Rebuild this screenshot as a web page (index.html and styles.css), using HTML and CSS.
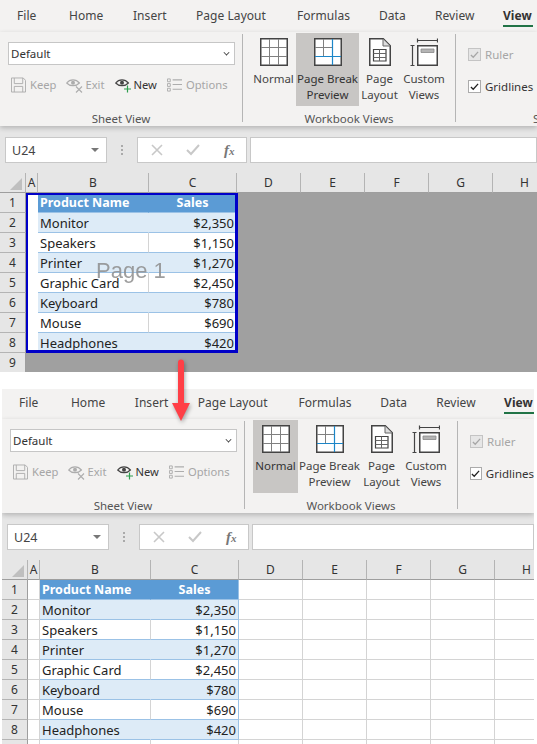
FILE: index.html
```html
<!DOCTYPE html>
<html lang="en">
<head>
<meta charset="utf-8">
<title>Page Break Preview vs Normal view</title>
<link rel="stylesheet" href="styles.css">
</head>
<body>
<svg class="sprite" aria-hidden="true">
  <symbol id="i-normal" viewBox="0 0 28 28">
    <path d="M.75.75h26.5v26.5H.75z" fill="#fff" stroke="#444" stroke-width="1.5"/>
    <path d="M9.5 1v26M18.5 1v26M1 9.5h26M1 18.5h26" fill="none" stroke="#808080" stroke-width="1"/>
  </symbol>
  <symbol id="i-break" viewBox="0 0 28 28">
    <path d="M.75.75h26.5v26.5H.75z" fill="#fff" stroke="#444" stroke-width="1.5"/>
    <path d="M9.5 1v18M1 9.5h18" fill="none" stroke="#808080" stroke-width="1"/>
    <path d="M18.5 1v26M1 18.5h26" fill="none" stroke="#1c86c8" stroke-width="1.2"/>
  </symbol>
  <symbol id="i-page" viewBox="0 0 22 28">
    <path d="M.75.75h13.5l7 7v19.5H.75z" fill="#fff" stroke="#444" stroke-width="1.5"/>
    <path d="M14 1v7h7" fill="#ddd" stroke="#666" stroke-width="1"/>
    <path d="M4.5 11.5h12.5v11.5H4.5z" fill="none" stroke="#444" stroke-width="1.2"/>
    <path d="M4.5 15.5h12.5M4.5 19.5h12.5M10.5 11.5v11.5" fill="none" stroke="#666" stroke-width="1"/>
  </symbol>
  <symbol id="i-custom" viewBox="0 0 28 28">
    <path d="M7.5 2.5h20M7.5.5v4M27.5.5v4M.5 7.5h4M.5 27.5h4M2.5 7.5v20" fill="none" stroke="#444" stroke-width="1.2"/>
    <path d="M7.75 7.75h19.5v19.5H7.75z" fill="#fff" stroke="#444" stroke-width="1.5"/>
    <path d="M11 11h13v3.5H11z" fill="#b4b4b4" stroke="#888" stroke-width=".8"/>
  </symbol>
  <symbol id="i-keep" viewBox="0 0 16 16">
    <path d="M.5.5h12.5l2.5 2.5v12.5H.5zM3.5.5v6h9v-6M3.5 15.5v-6h9v6" fill="none" stroke="#adadad" stroke-width="1"/>
  </symbol>
  <symbol id="i-exit" viewBox="0 0 17 16">
    <path d="M.7 6C4 1.8 10 1.8 13.4 6 10 9.6 4 9.6.7 6z" fill="none" stroke="#adadad" stroke-width="1.2"/>
    <circle cx="7" cy="5.8" r="2" fill="#adadad"/>
    <path d="M10 9.5l6 6M16 9.5l-6 6" fill="none" stroke="#adadad" stroke-width="1.1"/>
  </symbol>
  <symbol id="i-new" viewBox="0 0 17 16">
    <path d="M.7 6C4 1.8 10 1.8 13.4 6 10 9.6 4 9.6.7 6z" fill="none" stroke="#444" stroke-width="1.2"/>
    <circle cx="7" cy="5.8" r="2" fill="#444"/>
    <path d="M12.5 8.5v7M9 12h7" fill="none" stroke="#2f9e4f" stroke-width="1.2"/>
  </symbol>
  <symbol id="i-options" viewBox="0 0 16 16">
    <path d="M.5 1.5h3v3h-3zM.5 6.5h3v3h-3zM.5 11.5h3v3h-3z" fill="none" stroke="#adadad"/>
    <path d="M6 2.5h10M6 7.5h10M6 12.5h10" fill="none" stroke="#adadad" stroke-width="1.2"/>
  </symbol>
  <symbol id="i-cancel" viewBox="0 0 12 12"><path d="M1 1l10 10M11 1L1 11" fill="none" stroke="#c8c8c8" stroke-width="1.6"/></symbol>
  <symbol id="i-enter" viewBox="0 0 14 12"><path d="M1 6l4 4 8-9" fill="none" stroke="#c8c8c8" stroke-width="2"/></symbol>
  <symbol id="i-check" viewBox="0 0 10 10"><path d="M1 5.5l2.6 2.6L9 2" fill="none" stroke="currentColor" stroke-width="1.4"/></symbol>
</svg>

<section class="panel panel-top">
  <nav class="tabs">
    <span class="tab t-file">File</span><span class="tab t-home">Home</span><span class="tab t-insert">Insert</span><span class="tab t-layout">Page Layout</span><span class="tab t-formulas">Formulas</span><span class="tab t-data">Data</span><span class="tab t-review">Review</span><span class="tab tab-active">View</span>
  </nav>
  <div class="ribbon">
    <div class="group g-sheet">
      <div class="dropdown"><span>Default</span><span class="chev"></span></div>
      <div class="actions">
        <span class="act off"><svg class="ico-s"><use href="#i-keep"/></svg>Keep</span>
        <span class="act off"><svg class="ico-e"><use href="#i-exit"/></svg>Exit</span>
        <span class="act"><svg class="ico-e"><use href="#i-new"/></svg>New</span>
        <span class="act off"><svg class="ico-s"><use href="#i-options"/></svg>Options</span>
      </div>
      <div class="glabel">Sheet View</div>
    </div>
    <div class="group g-views">
      <div class="views">
        <div class="view v-normal"><svg class="ico-l"><use href="#i-normal"/></svg><span>Normal</span></div>
        <div class="view v-break on"><svg class="ico-l"><use href="#i-break"/></svg><span>Page Break<br>Preview</span></div>
        <div class="view v-page"><svg class="ico-p"><use href="#i-page"/></svg><span>Page<br>Layout</span></div>
        <div class="view v-custom"><svg class="ico-l"><use href="#i-custom"/></svg><span>Custom<br>Views</span></div>
      </div>
      <div class="glabel">Workbook Views</div>
    </div>
    <div class="group g-show">
      <label class="chk off"><span class="box"><svg class="tick"><use href="#i-check"/></svg></span>Ruler</label>
      <label class="chk"><span class="box"><svg class="tick"><use href="#i-check"/></svg></span>Gridlines</label>
      <div class="glabel glabel-left">Show</div>
    </div>
  </div>
  <div class="fbar">
    <div class="namebox"><span>U24</span><span class="tri"></span></div>
    <div class="dots"></div>
    <div class="fx"><svg class="ico-x"><use href="#i-cancel"/></svg><svg class="ico-c"><use href="#i-enter"/></svg><i>f<small>x</small></i></div>
    <div class="input"></div>
  </div>
  <div class="sheet">
    <div class="head corner"><svg class="tri-corner" viewBox="0 0 12 12"><path d="M12 0v12H0z" fill="#bfbfbf"/></svg></div>
    <div class="head">A</div><div class="head">B</div><div class="head">C</div><div class="head">D</div><div class="head">E</div><div class="head">F</div><div class="head">G</div><div class="head">H</div>

    <div class="rh">1</div><div class="c a"></div><div class="c b hd">Product Name</div><div class="c cc hd mid">Sales</div><div class="out"></div>
    <div class="rh">2</div><div class="c a"></div><div class="c b band">Monitor</div><div class="c cc band">$2,350</div><div class="out"></div>
    <div class="rh">3</div><div class="c a"></div><div class="c b tb">Speakers</div><div class="c cc tb">$1,150</div><div class="out"></div>
    <div class="rh">4</div><div class="c a"></div><div class="c b band">Printer</div><div class="c cc band">$1,270</div><div class="out"></div>
    <div class="rh">5</div><div class="c a"></div><div class="c b tb">Graphic Card</div><div class="c cc tb">$2,450</div><div class="out"></div>
    <div class="rh">6</div><div class="c a"></div><div class="c b band">Keyboard</div><div class="c cc band">$780</div><div class="out"></div>
    <div class="rh">7</div><div class="c a"></div><div class="c b tb">Mouse</div><div class="c cc tb">$690</div><div class="out"></div>
    <div class="rh">8</div><div class="c a"></div><div class="c b band">Headphones</div><div class="c cc band">$420</div><div class="out"></div>
    <div class="rh">9</div><div class="out out-wide"></div>

    <div class="print-area"></div>
    <div class="watermark">Page 1</div>
  </div>
</section>

<section class="panel panel-bottom">
  <nav class="tabs">
    <span class="tab t-file">File</span><span class="tab t-home">Home</span><span class="tab t-insert">Insert</span><span class="tab t-layout">Page Layout</span><span class="tab t-formulas">Formulas</span><span class="tab t-data">Data</span><span class="tab t-review">Review</span><span class="tab tab-active">View</span>
  </nav>
  <div class="ribbon">
    <div class="group g-sheet">
      <div class="dropdown"><span>Default</span><span class="chev"></span></div>
      <div class="actions">
        <span class="act off"><svg class="ico-s"><use href="#i-keep"/></svg>Keep</span>
        <span class="act off"><svg class="ico-e"><use href="#i-exit"/></svg>Exit</span>
        <span class="act"><svg class="ico-e"><use href="#i-new"/></svg>New</span>
        <span class="act off"><svg class="ico-s"><use href="#i-options"/></svg>Options</span>
      </div>
      <div class="glabel">Sheet View</div>
    </div>
    <div class="group g-views">
      <div class="views">
        <div class="view v-normal on"><svg class="ico-l"><use href="#i-normal"/></svg><span>Normal</span></div>
        <div class="view v-break"><svg class="ico-l"><use href="#i-break"/></svg><span>Page Break<br>Preview</span></div>
        <div class="view v-page"><svg class="ico-p"><use href="#i-page"/></svg><span>Page<br>Layout</span></div>
        <div class="view v-custom"><svg class="ico-l"><use href="#i-custom"/></svg><span>Custom<br>Views</span></div>
      </div>
      <div class="glabel">Workbook Views</div>
    </div>
    <div class="group g-show">
      <label class="chk off"><span class="box"><svg class="tick"><use href="#i-check"/></svg></span>Ruler</label>
      <label class="chk"><span class="box"><svg class="tick"><use href="#i-check"/></svg></span>Gridlines</label>
    </div>
  </div>
  <div class="fbar">
    <div class="namebox"><span>U24</span><span class="tri"></span></div>
    <div class="dots"></div>
    <div class="fx"><svg class="ico-x"><use href="#i-cancel"/></svg><svg class="ico-c"><use href="#i-enter"/></svg><i>f<small>x</small></i></div>
    <div class="input"></div>
  </div>
  <div class="sheet">
    <div class="head corner"><svg class="tri-corner" viewBox="0 0 12 12"><path d="M12 0v12H0z" fill="#bfbfbf"/></svg></div>
    <div class="head">A</div><div class="head">B</div><div class="head">C</div><div class="head">D</div><div class="head">E</div><div class="head">F</div><div class="head">G</div><div class="head">H</div>

    <div class="rh">1</div><div class="c a"></div><div class="c b hd">Product Name</div><div class="c cc hd mid">Sales</div><div class="c"></div><div class="c"></div><div class="c"></div><div class="c"></div><div class="c"></div>
    <div class="rh">2</div><div class="c a"></div><div class="c b band">Monitor</div><div class="c cc band">$2,350</div><div class="c"></div><div class="c"></div><div class="c"></div><div class="c"></div><div class="c"></div>
    <div class="rh">3</div><div class="c a"></div><div class="c b tb">Speakers</div><div class="c cc tb">$1,150</div><div class="c"></div><div class="c"></div><div class="c"></div><div class="c"></div><div class="c"></div>
    <div class="rh">4</div><div class="c a"></div><div class="c b band">Printer</div><div class="c cc band">$1,270</div><div class="c"></div><div class="c"></div><div class="c"></div><div class="c"></div><div class="c"></div>
    <div class="rh">5</div><div class="c a"></div><div class="c b tb">Graphic Card</div><div class="c cc tb">$2,450</div><div class="c"></div><div class="c"></div><div class="c"></div><div class="c"></div><div class="c"></div>
    <div class="rh">6</div><div class="c a"></div><div class="c b band">Keyboard</div><div class="c cc band">$780</div><div class="c"></div><div class="c"></div><div class="c"></div><div class="c"></div><div class="c"></div>
    <div class="rh">7</div><div class="c a"></div><div class="c b tb">Mouse</div><div class="c cc tb">$690</div><div class="c"></div><div class="c"></div><div class="c"></div><div class="c"></div><div class="c"></div>
    <div class="rh">8</div><div class="c a"></div><div class="c b band">Headphones</div><div class="c cc band">$420</div><div class="c"></div><div class="c"></div><div class="c"></div><div class="c"></div><div class="c"></div>
    <div class="rh"></div><div class="c a"></div><div class="c"></div><div class="c"></div><div class="c"></div><div class="c"></div><div class="c"></div><div class="c"></div><div class="c"></div>
  </div>
</section>

<svg class="arrow" viewBox="0 0 18 64" aria-hidden="true"><path d="M9 1.5a3 3 0 0 1 3 3V45h6L9 63 0 45h6V4.5a3 3 0 0 1 3-3z" fill="#ff3f46"/></svg>
</body>
</html>
```
FILE: styles.css
```css
* { box-sizing: border-box; }
html, body { margin: 0; height: 744px; overflow: hidden; background: #fff; }
body { position: relative; font-family: "Noto Sans", "Open Sans", sans-serif; font-size: 12px; color: #444; }
.sprite { position: absolute; width: 0; height: 0; }

.panel { background: #e6e6e6; overflow: hidden; position: relative; }
.panel-top { height: 372px; width: 537px; }
.panel-bottom { height: 355px; width: 532px; margin: 17px 0 0 2px; }

/* tabs */
.tabs { display: flex; background: #f3f2f1; line-height: 18px; white-space: nowrap; }
.panel-top .tabs { height: 32px; padding: 7px 0 0 17px; }
.panel-bottom .tabs { height: 30px; padding: 5px 0 0 17px; }
.tab { display: block; letter-spacing: .05px; }
.t-file { width: 52px; }
.t-home { width: 64px; }
.t-insert { width: 63px; }
.t-layout { width: 101px; }
.t-formulas { width: 82px; }
.t-data { width: 56px; }
.t-review { width: 68px; }
.tab-active { font-weight: 700; color: #333; height: 20px; width: 30px; border-bottom: 2px solid #217346; }

/* ribbon */
.ribbon { display: flex; height: 94px; padding-top: 2px; padding-bottom: 4px; background: #f3f2f1; box-shadow: 0 2px 5px rgba(0,0,0,.22); position: relative; }
.group { display: flex; flex-direction: column; border-right: 1px solid #b5b5b5; flex: none; }
.g-sheet { width: 243px; }
.g-views { width: 213px; padding-left: 8px; }
.g-show { flex: 1; border-right: 0; padding-left: 12px; min-width: 0; }
.glabel { margin-top: auto; margin-bottom: -4px; text-align: center; line-height: 14px; font-size: 11.5px; color: #555; }
.g-views .glabel { margin-left: -8px; }
.glabel-left { text-align: left; padding-left: 65px; white-space: nowrap; overflow: hidden; }

.dropdown { display: flex; justify-content: space-between; align-items: center; width: 227px; height: 23px; margin: 8px 0 0 8px; padding: 0 4px 0 2px; background: #fff; border: 1px solid #c6c6c6; color: #333; font-size: 11.5px; }
.chev { width: 5px; height: 5px; margin: -2px 1px 0 0; border-right: 1.3px solid #333; border-bottom: 1.3px solid #333; transform: rotate(45deg) scale(.85); }

.actions { display: flex; margin: 11px 0 0 11px; font-size: 11.2px; }
.act { display: flex; align-items: center; gap: 4px; color: #333; line-height: 18px; margin-right: 10px; }
.act.off { color: #a6a6a6; }
.ico-s { width: 15px; height: 16px; }
.ico-e { width: 17px; height: 16px; margin-right: -2px; }

.views { display: flex; margin-top: -1px; }
.view { display: flex; flex-direction: column; align-items: center; height: 73px; padding-top: 5px; text-align: center; line-height: 16px; color: #444; white-space: nowrap; font-size: 11.5px; }
.view.on { background: #c8c6c4; color: #333; }
.v-normal { width: 45px; }
.v-break { width: 63px; }
.v-page { width: 41px; }
.v-custom { width: 48px; }
.ico-l { width: 28px; height: 28px; margin-bottom: 5px; flex: none; }
.ico-p { width: 22px; height: 28px; margin-bottom: 5px; flex: none; }

.chk { display: flex; align-items: center; gap: 4px; height: 18px; color: #333; white-space: nowrap; margin-top: 11px; font-size: 11.5px; }
.chk + .chk { margin-top: 14px; }
.chk.off { color: #a6a6a6; }
.box { display: flex; align-items: center; justify-content: center; width: 13px; height: 13px; background: #fff; border: 1px solid #ababab; color: #222; }
.chk.off .box { background: #e6e6e6; border-color: #c4c4c4; color: #a6a6a6; }
.tick { width: 9px; height: 9px; }

/* formula bar */
.fbar { display: flex; height: 26px; margin-top: 11px; padding-left: 5px; }
.namebox { display: flex; justify-content: space-between; align-items: center; width: 102px; padding: 0 7px 0 6px; background: #fff; border: 1px solid #c8c8c8; font-size: 12.5px; color: #444; }
.tri { width: 0; height: 0; border: 4px solid transparent; border-top: 4px solid #777; margin-top: 4px; }
.dots { width: 2px; height: 10px; margin: 8px 14px 0 14px; background: repeating-linear-gradient(#aaa 0 2px, transparent 2px 4px); }
.fx { display: flex; align-items: center; width: 110px; padding-left: 13px; background: #fff; border: 1px solid #c8c8c8; }
.fx i { font-family: "Liberation Serif", serif; font-size: 15px; font-weight: 700; color: #777; margin-left: 24px; line-height: 1; }
.fx small { font-size: 11px; }
.ico-x { width: 12px; height: 12px; }
.ico-c { width: 14px; height: 12px; margin-left: 23px; }
.input { flex: 1; margin-left: 3px; background: #fff; border: 1px solid #c8c8c8; }

/* sheet */
.sheet { position: relative; display: grid; grid-template-columns: 26px 12px 111px 88px repeat(5, 64px); grid-auto-rows: 20px; margin-top: 10px; background: #fff; font-size: 13px; color: #222; }
.head { display: flex; align-items: center; justify-content: center; background: #e6e6e6; border-right: 1px solid #b4b4b4; border-bottom: 1px solid #9e9e9e; color: #333; font-size: 12px; }
.corner { justify-content: flex-end; align-items: flex-end; padding: 0 3px 2px 0; }
.tri-corner { width: 12px; height: 12px; }
.rh { display: flex; align-items: center; justify-content: center; background: #e6e6e6; border-right: 1px solid #9e9e9e; border-bottom: 1px solid #b4b4b4; color: #333; font-size: 12px; }
.c { display: flex; align-items: center; border-right: 1px solid #d4d4d4; border-bottom: 1px solid #d4d4d4; white-space: nowrap; min-width: 0; }
.b { padding-left: 2px; }
.cc { justify-content: flex-end; padding-right: 2px; }
.hd { background: #5b9bd5; color: #fff; font-weight: 700; font-size: 12.5px; border-color: #5b9bd5; border-bottom-color: #9bc2e6; }
.hd.mid { justify-content: center; padding: 0; }
.band { background: #ddebf7; border-right-color: #ddebf7; border-bottom-color: #9bc2e6; }
.tb { border-bottom-color: #9bc2e6; }
.cc.band, .cc.tb, .cc.hd { border-right-color: #9bc2e6; }
.out { grid-column: 5 / -1; background: #a0a0a0; }
.out-wide { grid-column: 2 / -1; }
.panel-top .c.a { border-color: #fff; }
.panel-top .tb.b { border-right-color: #d4d4d4; }

.print-area { position: absolute; left: 26px; top: 20px; width: 212px; height: 160px; border: solid #0000c8; border-width: 2px 3px 3px 2px; }
.watermark { position: absolute; left: 96px; top: 85px; font-family: "Liberation Sans", sans-serif; font-size: 22px; line-height: 26px; color: #8e8e8e; opacity: .85; }

.arrow { position: absolute; left: 172px; top: 358px; width: 18px; height: 64px; filter: drop-shadow(1px 2px 2px rgba(0,0,0,.35)); }
```
